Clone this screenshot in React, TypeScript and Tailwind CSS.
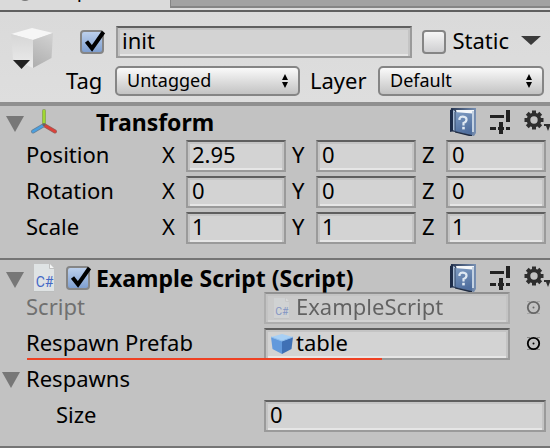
import { useId, useState } from "react";
import type { ReactNode } from "react";

const fieldClass =
  "h-8 w-full min-w-0 border-2 border-[#9a9a9a] border-t-[#5f5f5f] bg-[#d3d3d3] pb-1 pl-1 text-[22px] leading-6 text-black outline-none shadow-[inset_0_2px_0_#c4c4c4,inset_2px_0_0_#c4c4c4,inset_-2px_0_0_#c4c4c4,inset_0_-2px_0_#e6e6e6]";

function Tick({ defaultChecked = false, label, id }: { defaultChecked?: boolean; label?: string; id?: string }) {
  return (
    <span className="relative block size-6 shrink-0">
      <input
        id={id}
        type="checkbox"
        aria-label={label}
        defaultChecked={defaultChecked}
        className="peer block size-6 appearance-none rounded-[4px] border-2 border-[#858585] bg-linear-to-b from-[#f6f6f6] to-[#cfcfd1] checked:from-[#bcd0ec] checked:to-[#7f9fd0]"
      />
      <svg
        viewBox="0 0 26 24"
        className="pointer-events-none absolute top-0 left-0 hidden h-6 w-[26px] peer-checked:block"
        fill="none"
      >
        <path d="M6.5 11.5 12 18.5 23.5 2" stroke="#000" strokeWidth="4" />
      </svg>
    </span>
  );
}

function Popup({ id, options }: { id: string; options: string[] }) {
  return (
    <span className="relative block h-[30px] w-full">
      <select
        id={id}
        className="block h-[30px] w-full appearance-none rounded-[5px] border-2 border-[#858585] bg-linear-to-b from-[#fafafa] to-[#c3c3c3] pb-[2px] pl-[10px] text-[18px] leading-6 text-black outline-none"
      >
        {options.map((o) => (
          <option key={o}>{o}</option>
        ))}
      </select>
      <svg viewBox="0 0 8 14" className="pointer-events-none absolute top-2 right-[11px] h-[14px] w-2">
        <path d="M4 0 7 6H1zM4 14 7 8H1z" />
      </svg>
    </span>
  );
}

function Foldout({ label }: { label: string }) {
  return (
    <button type="button" aria-label={label} className="block h-4 w-[18px] shrink-0">
      <svg viewBox="0 0 18 16" className="block h-4 w-[18px]" fill="#777">
        <path d="M0 0h18L9 16z" />
      </svg>
    </button>
  );
}

function AxisIcon() {
  return (
    <svg viewBox="0 0 28 26" className="block h-[26px] w-7" fill="none" strokeLinecap="round">
      <path d="M14 2v14" stroke="#8b9a67" strokeWidth="4" />
      <path d="M14 16 3 22.500" stroke="#66839a" strokeWidth="4" />
      <path d="M14 16 25 22.500" stroke="#9c5c58" strokeWidth="4" />
      <path d="M14 2v13" stroke="#9fd832" strokeWidth="2.600" />
      <path d="M14 16 3 22.500" stroke="#4a9fe0" strokeWidth="2.400" />
      <path d="M14 16 25 22.500" stroke="#dd4038" strokeWidth="2.400" />
      <circle cx="14" cy="15.500" r="1.500" fill="#666" />
    </svg>
  );
}

function CSharpIcon({ className }: { className: string }) {
  return (
    <svg viewBox="0 0 20 28" className={className}>
      <path d="M0 0h16l4 4v24H0z" fill="#dfe3e4" />
      <path d="M0 28h20" stroke="#999" strokeWidth="1" />
      <path d="M15.500 0v4.500H20" fill="#f8f8f8" stroke="#b5b5b5" strokeWidth="0.800" />
      <text x="10.500" y="23" textAnchor="middle" fontSize="14" fill="#4468c6" fontFamily="Roboto, sans-serif">
        C#
      </text>
    </svg>
  );
}

function BookIcon() {
  return (
    <svg viewBox="0 0 26 28" className="block h-7 w-[26px]">
      <defs>
        <linearGradient id="cover" x1="0" y1="0" x2="0.300" y2="1">
          <stop offset="0" stopColor="#7f9cc2" />
          <stop offset="1" stopColor="#4f6e9e" />
        </linearGradient>
        <linearGradient id="edge" x1="0" y1="0" x2="1" y2="0">
          <stop offset="0" stopColor="#24324d" />
          <stop offset="1" stopColor="#7890b3" />
        </linearGradient>
      </defs>
      <path d="M1 0h25v25l-2 3-5-1L0 23z" fill="url(#edge)" />
      <path d="M6 2h18v4H7z" fill="#f4f7fa" />
      <path d="M22 3h2v21h-2z" fill="#c4d2e2" />
      <path d="M0 2 3 1v22l-3 1z" fill="#1d2c48" />
      <path d="M3 2 5 3v20l-2-1z" fill="#a9bdd6" />
      <path d="M5 4 22 5.500V27L5 23z" fill="url(#cover)" />
      <path d="M5 4v19" stroke="#33486b" strokeWidth="1" />
      <path d="M5 23.500 22 27v1h-3L5 24.500z" fill="#1e2b42" />
      <path
        d="M9.500 12V10.500Q10.500 8.500 13 8.700 16.500 9 16.500 11.500 16.500 14 13.500 15V17.500"
        fill="none"
        stroke="#dfe9f3"
        strokeWidth="2.200"
      />
      <path d="M12.200 18.800h2.600v2.600h-2.600z" fill="#dfe9f3" />
    </svg>
  );
}

function PresetIcon() {
  return (
    <svg viewBox="0 0 20 24" className="block h-6 w-5" fill="#222">
      <path d="M0 5h14v3H0zM16 0h4v12h-4zM9 12h4v12H9zM0 17h6v3H0zM8 17h6v3H8zM16 17h4v3h-4z" />
    </svg>
  );
}

function GearIcon() {
  return (
    <svg viewBox="0 0 26 24" className="block h-6 w-[26px]">
      <circle cx="10" cy="10" r="5.500" fill="none" stroke="#2e2e2e" strokeWidth="3.600" />
      {[0, 45, 90, 135, 180, 225, 270, 315].map((a) => (
        <path key={a} d="M8 0.500h4V4H8z" fill="#2e2e2e" transform={`rotate(${a} 10 10)`} />
      ))}
      <path d="M20 14h8v2h-2l-2 5-2-5h-2z" fill="#2e2e2e" />
    </svg>
  );
}

function PrefabIcon() {
  return (
    <svg viewBox="0 0 22 20" className="block h-5 w-[22px]">
      <path d="M0 3 11 0l11 3-11 4z" fill="#a8d0f5" />
      <path d="M0 3 11 7v13L1.500 15z" fill="#6299dc" />
      <path d="M22 3 11 7v13l9.500-5z" fill="#3f70b5" />
      <path d="M0 3 11 7l11-4" fill="none" stroke="#8fbff0" strokeWidth="1" />
    </svg>
  );
}

function ObjectCube() {
  return (
    <svg viewBox="0 0 42 42" className="block size-[42px]">
      <defs>
        <linearGradient id="cubeLeft" x1="0" y1="0" x2="0" y2="1">
          <stop offset="0" stopColor="#d6d6d6" />
          <stop offset="1" stopColor="#ececec" />
        </linearGradient>
        <linearGradient id="cubeRight" x1="0.300" y1="1" x2="0.600" y2="0">
          <stop offset="0" stopColor="#b0b0b0" />
          <stop offset="1" stopColor="#d0d0d0" />
        </linearGradient>
      </defs>
      <path d="M0 6 21 0l21 5-20 7z" fill="#f6f6f6" />
      <path d="M0 6 22 12v28L2 31z" fill="url(#cubeLeft)" />
      <path d="M42 5 22 12v28l18.500-10z" fill="url(#cubeRight)" />
      <path d="M2 32h17l-8.500 9z" fill="#222" />
    </svg>
  );
}

function Picker({ label, disabled = false }: { label: string; disabled?: boolean }) {
  return (
    <button
      type="button"
      aria-label={label}
      disabled={disabled}
      className="mt-2 mr-[9px] ml-4 block size-[15px] shrink-0 text-black disabled:text-[#666]"
    >
      <svg viewBox="0 0 15 15" className="block size-[15px]" fill="none" stroke="currentColor">
        <circle cx="7.500" cy="7.500" r="5.700" strokeWidth="1.800" />
        <path d="M1 1.500h3M11 1.500h3M1 13.500h3M11 13.500h3" strokeWidth="1" opacity="0.300" />
        <circle cx="7.500" cy="7.500" r="1" fill="currentColor" stroke="none" />
      </svg>
    </button>
  );
}

function HeaderTools({ name }: { name: string }) {
  return (
    <div className="ml-auto flex shrink-0 items-start pt-[2px]">
      <button type="button" aria-label={`${name} help`} className="block">
        <BookIcon />
      </button>
      <button type="button" aria-label={`${name} presets`} className="mt-[2px] ml-[14px] block">
        <PresetIcon />
      </button>
      <button type="button" aria-label={`${name} settings`} className="mt-[2px] ml-[14px] block">
        <GearIcon />
      </button>
    </div>
  );
}

function Vector({ label, values }: { label: string; values: [string, string, string] }) {
  const id = useId();
  return (
    <div role="group" aria-label={label} className="flex items-start pr-1 pl-[26px]">
      <span className="w-[134px] shrink-0">{label}</span>
      <div className="grid flex-1 grid-cols-3 gap-1">
        {["X", "Y", "Z"].map((axis, i) => (
          <div key={axis} className="flex">
            <label htmlFor={id + axis} className="w-[26px] shrink-0 pl-[2px]">
              {axis}
            </label>
            <input id={id + axis} defaultValue={values[i]} className={fieldClass} />
          </div>
        ))}
      </div>
    </div>
  );
}

function PropertyRow({ label, children }: { label: ReactNode; children: ReactNode }) {
  return (
    <div className="flex items-start pl-[26px]">
      <div className="w-[238px] shrink-0">{label}</div>
      <div className="flex min-w-0 flex-1 items-start">{children}</div>
    </div>
  );
}

export default function App() {
  const [open] = useState(true);
  return (
    <main className="overflow-hidden bg-[#c2c2c2] font-['Noto_Sans',sans-serif] text-[22px] leading-7 text-black">
      <nav className="flex h-[10px] overflow-hidden bg-[#dedede]">
        <button type="button" className="flex h-[10px] w-[170px] shrink-0 items-end bg-[#dadada] pl-[18px] text-[20px]">
          <svg viewBox="0 0 14 14" className="mb-[9px] block size-[14px] shrink-0">
            <circle cx="7" cy="7" r="7" fill="#777" />
          </svg>
          <span className="mb-[6px] ml-4 block leading-7">Inspector</span>
        </button>
        <div className="h-2 flex-1 border-b-2 border-l border-[#858585] bg-[#a2a2a2]" />
      </nav>

      <header className="flex items-start border-t-2 border-b-4 border-t-[#5f5f5f] border-b-[#8f8f8f] bg-linear-to-b from-[#dadada] to-[#dedede] pt-[14px] pb-[6px]">
        <button type="button" aria-label="Object icon" className="mt-[2px] ml-[11px] block shrink-0">
          <ObjectCube />
        </button>
        <div className="ml-[13px] flex-1">
          <div className="flex items-start pr-[9px] pl-[14px]">
            <span className="mt-1">
              <Tick defaultChecked label="Active" />
            </span>
            <input aria-label="Name" defaultValue="init" className={`${fieldClass} ml-3 flex-1`} />
            <span className="mt-1 ml-[10px]">
              <Tick id="static" />
            </span>
            <label htmlFor="static" className="ml-[6px]">
              Static
            </label>
            <button type="button" aria-label="Static options" className="mt-[10px] ml-3 block shrink-0">
              <svg viewBox="0 0 20 10" className="block h-[10px] w-5" fill="#3b3b3b">
                <path d="M0 0h20L10 9z" />
              </svg>
            </button>
          </div>
          <div className="mt-2 flex items-start pr-[6px]">
            <label htmlFor="tag" className="w-[49px] shrink-0">
              Tag
            </label>
            <div className="min-w-0 flex-[185]">
              <Popup id="tag" options={["Untagged", "Respawn", "Player"]} />
            </div>
            <label htmlFor="layer" className="w-[78px] shrink-0 pl-[10px]">
              Layer
            </label>
            <div className="min-w-0 flex-[166]">
              <Popup id="layer" options={["Default", "Water", "UI"]} />
            </div>
          </div>
        </div>
      </header>

      <section className="pb-[14px]">
        <div className="flex h-[34px] items-start pl-[6px]">
          <div className="mt-[10px]">
            <Foldout label="Toggle Transform" />
          </div>
          <div className="mt-[3px] ml-[6px] w-[66px]">
            <AxisIcon />
          </div>
          <h2 className="mt-[2px] text-[23px] font-bold">Transform</h2>
          <HeaderTools name="Transform" />
        </div>
        <div className="space-y-1">
          <Vector label="Position" values={["2.95", "0", "0"]} />
          <Vector label="Rotation" values={["0", "0", "0"]} />
          <Vector label="Scale" values={["1", "1", "1"]} />
        </div>
      </section>

      <section className="border-y-2 border-[#757575] pb-[14px]">
        <div className="flex h-8 items-start pl-[6px]">
          <div className="mt-3">
            <Foldout label="Toggle Example Script" />
          </div>
          <div className="mt-1 ml-[10px]">
            <CSharpIcon className="block h-7 w-5" />
          </div>
          <div className="mt-[6px] mr-[6px] ml-3">
            <Tick defaultChecked label="Enable Example Script" />
          </div>
          <h2 className="mt-1 text-[23px] font-bold whitespace-nowrap">Example Script (Script)</h2>
          <div className="ml-auto pt-[2px]">
            <HeaderTools name="Example Script" />
          </div>
        </div>
        {open && (
          <div className="space-y-1">
            <PropertyRow label={<span className="text-[#707070]">Script</span>}>
              <button type="button" disabled className={`${fieldClass} flex items-center opacity-50`}>
                <CSharpIcon className="mt-1 ml-1 block h-[21px] w-[15px]" />
                <span className="ml-[7px]">ExampleScript</span>
              </button>
              <Picker label="Select script" disabled />
            </PropertyRow>
            <div className="relative">
              <PropertyRow label="Respawn Prefab">
                <button type="button" className={`${fieldClass} flex items-center`}>
                  <span className="mt-1 ml-px">
                    <PrefabIcon />
                  </span>
                  <span className="ml-[3px]">table</span>
                </button>
                <Picker label="Select prefab" />
              </PropertyRow>
              <div className="absolute bottom-0 left-[27px] h-[2px] w-[355px] bg-[#ee4123]" />
            </div>
            <div className="flex h-8 items-start pl-[2px]">
              <div className="mt-2 mr-[6px]">
                <Foldout label="Toggle Respawns" />
              </div>
              <span>Respawns</span>
            </div>
            <PropertyRow
              label={
                <label htmlFor="size" className="pl-[30px]">
                  Size
                </label>
              }
            >
              <input id="size" defaultValue="0" className={`${fieldClass} mr-1`} />
            </PropertyRow>
          </div>
        )}
      </section>
    </main>
  );
}
